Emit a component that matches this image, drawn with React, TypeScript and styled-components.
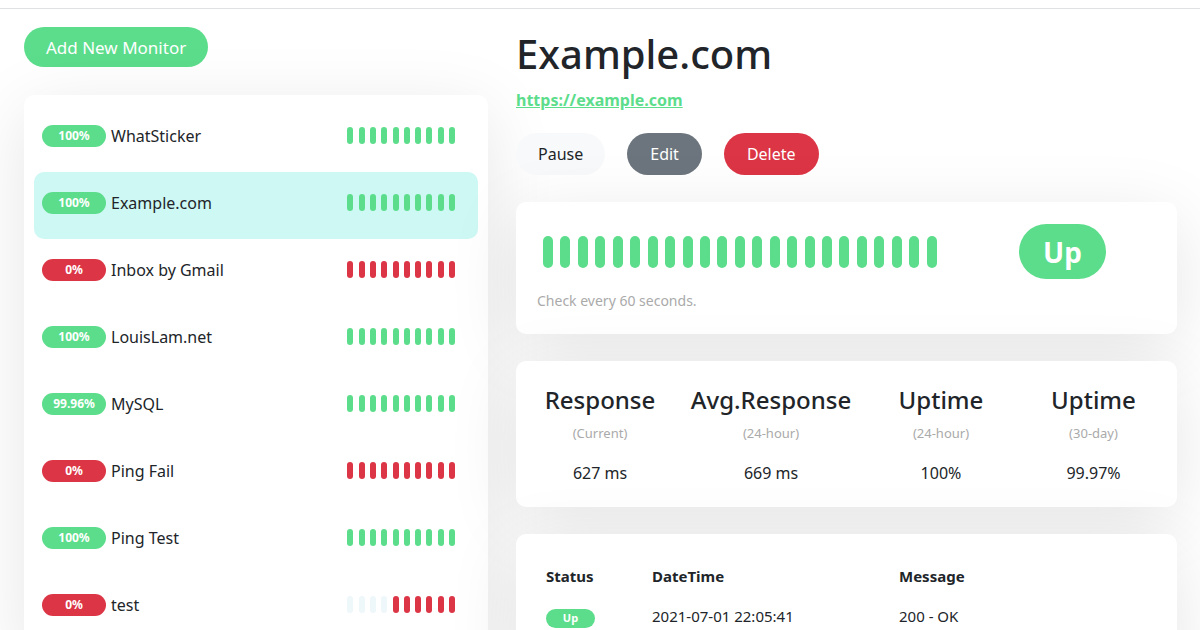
import React from 'react';
import styled, { createGlobalStyle } from 'styled-components';

const GREEN = '#5cdd8b';
const RED = '#dc3545';
const EMPTY = '#eef7fa';

type Beat = 'up' | 'down' | 'empty';

const monitors: { name: string; uptime: string; up: boolean; beats: Beat[] }[] = [
  { name: 'WhatSticker', uptime: '100%', up: true, beats: Array(10).fill('up') },
  { name: 'Example.com', uptime: '100%', up: true, beats: Array(10).fill('up') },
  { name: 'Inbox by Gmail', uptime: '0%', up: false, beats: Array(10).fill('down') },
  { name: 'LouisLam.net', uptime: '100%', up: true, beats: Array(10).fill('up') },
  { name: 'MySQL', uptime: '99.96%', up: true, beats: Array(10).fill('up') },
  { name: 'Ping Fail', uptime: '0%', up: false, beats: Array(10).fill('down') },
  { name: 'Ping Test', uptime: '100%', up: true, beats: Array(10).fill('up') },
  {
    name: 'test',
    uptime: '0%',
    up: false,
    beats: [...Array(4).fill('empty'), ...Array(6).fill('down')],
  },
];

const stats = [
  { title: 'Response', sub: '(Current)', value: '627 ms' },
  { title: 'Avg.Response', sub: '(24-hour)', value: '669 ms' },
  { title: 'Uptime', sub: '(24-hour)', value: '100%' },
  { title: 'Uptime', sub: '(30-day)', value: '99.97%' },
];

const beatColor = (b: Beat) => (b === 'up' ? GREEN : b === 'down' ? RED : EMPTY);

const GlobalStyle = createGlobalStyle`
  * { box-sizing: border-box; }
  html, body {
    margin: 0;
    background: #fff;
    font-family: "Noto Sans", "Open Sans", sans-serif;
    color: #212529;
    overflow: hidden;
  }
`;

const Header = styled.header`
  height: 9px;
  border-bottom: 1px solid #dfe1e3;
`;

const Layout = styled.main`
  display: grid;
  grid-template-columns: 464px 1fr;
  column-gap: 28px;
  padding: 0 23px 0 24px;
`;

const Sidebar = styled.div`
  display: flex;
  flex-direction: column;
  align-items: flex-start;
  padding-top: 18px;
`;

const PillButton = styled.button<{ $bg: string; $fg?: string }>`
  border: none;
  border-radius: 50rem;
  background: ${p => p.$bg};
  color: ${p => p.$fg || '#fff'};
  font-family: inherit;
  font-size: 16px;
  height: 42px;
  padding: 0 23px;
  cursor: pointer;
`;

const AddButton = styled(PillButton)`
  height: 40px;
  padding: 0 22px;
  font-size: 17px;
`;

const PauseButton = styled(PillButton)`
  padding: 0 22px;
`;

const Shadowed = styled.div`
  background: #fff;
  border-radius: 10px;
  box-shadow: 0 15px 70px rgba(0, 0, 0, 0.1);
`;

const ListPanel = styled(Shadowed)`
  align-self: stretch;
  margin-top: 28px;
  padding: 10px 10px 0;
  height: 560px;
`;

const ListRow = styled.div<{ $active?: boolean }>`
  display: flex;
  align-items: center;
  height: 67px;
  padding: 0 23px 6px 8px;
  border-radius: 10px;
  background: ${p => (p.$active ? '#cdf8f4' : 'transparent')};
`;

const UptimeBadge = styled.span<{ $up: boolean }>`
  display: inline-flex;
  align-items: center;
  justify-content: center;
  width: 64px;
  height: 22px;
  border-radius: 50rem;
  background: ${p => (p.$up ? GREEN : RED)};
  color: #fff;
  font-size: 12px;
  font-weight: 700;
`;

const MonitorName = styled.span`
  margin-left: 5px;
  font-size: 16px;
  flex: 1;
`;

const BeatRow = styled.div<{ $gap: number }>`
  display: flex;
  align-items: center;
  gap: ${p => p.$gap}px;
`;

const BeatBar = styled.div<{ $w: number; $h: number; $c: string }>`
  width: ${p => p.$w}px;
  height: ${p => p.$h}px;
  border-radius: 50rem;
  background: ${p => p.$c};
`;

const Detail = styled.section`
  display: flex;
  flex-direction: column;
  padding-top: 21px;
`;

const Title = styled.h1`
  margin: 0;
  font-size: 40px;
  font-weight: 500;
  line-height: 48px;
`;

const UrlLink = styled.a`
  margin-top: 10px;
  color: ${GREEN};
  font-weight: 700;
  font-size: 16px;
  line-height: 24px;
  text-decoration: underline;
  align-self: flex-start;
`;

const Actions = styled.div`
  display: flex;
  gap: 22px;
  margin-top: 21px;
`;

const Card = styled(Shadowed)`
  margin-top: 27px;
`;

const BeatCard = styled(Card)`
  padding: 22px 20px 23px 21px;
`;

const BeatLayout = styled.div`
  display: grid;
  grid-template-columns: 440px 1fr;
  align-items: center;
`;

const BigBeats = styled(BeatRow)`
  padding-left: 6px;
`;

const StatusBadge = styled.div`
  justify-self: start;
  margin-left: 42px;
  width: 87px;
  height: 55px;
  border-radius: 50rem;
  background: ${GREEN};
  color: #fff;
  font-size: 28px;
  font-weight: 700;
  display: flex;
  align-items: center;
  justify-content: center;
`;

const IntervalText = styled.div`
  margin-top: 12px;
  color: #aaa;
  font-size: 14px;
  line-height: 20px;
`;

const StatsCard = styled(Card)`
  display: grid;
  grid-template-columns: 140px 202px 138px 1fr;
  padding: 24px 0 22px 14px;
`;

const Stat = styled.div`
  display: flex;
  flex-direction: column;
  align-items: center;
  text-align: center;
`;

const StatTitle = styled.div`
  font-size: 24px;
  font-weight: 500;
  line-height: 29px;
`;

const StatSub = styled.div`
  margin-top: 10px;
  font-size: 13px;
  line-height: 19px;
  color: #aaa;
`;

const StatValue = styled.div`
  margin-top: 18px;
  font-size: 16px;
  line-height: 24px;
`;

const TableCard = styled(Card)`
  padding: 31px 20px 20px 30px;
  height: 200px;
`;

const TableGrid = styled.div`
  display: grid;
  grid-template-columns: 106px 247px 1fr;
  row-gap: 18px;
  align-items: center;
`;

const HeadCell = styled.div`
  font-size: 15px;
  font-weight: 700;
  line-height: 22px;
`;

const Cell = styled.div`
  font-size: 15px;
  line-height: 22px;
`;

const SmallUp = styled.span`
  display: inline-flex;
  align-items: center;
  justify-content: center;
  width: 49px;
  height: 19px;
  border-radius: 50rem;
  background: ${GREEN};
  color: #fff;
  font-size: 11px;
  font-weight: 700;
`;

export default function App() {
  return (
    <>
      <GlobalStyle />
      <Header />
      <Layout>
        <Sidebar>
          <AddButton $bg={GREEN}>Add New Monitor</AddButton>
          <ListPanel>
            {monitors.map((m, i) => (
              <ListRow key={m.name} $active={i === 1}>
                <UptimeBadge $up={m.up}>{m.uptime}</UptimeBadge>
                <MonitorName>{m.name}</MonitorName>
                <BeatRow $gap={5.3}>
                  {m.beats.map((b, j) => (
                    <BeatBar key={j} $w={6} $h={17} $c={beatColor(b)} />
                  ))}
                </BeatRow>
              </ListRow>
            ))}
          </ListPanel>
        </Sidebar>

        <Detail>
          <Title>Example.com</Title>
          <UrlLink href="#">https://example.com</UrlLink>
          <Actions>
            <PauseButton $bg="#f8f9fa" $fg="#212529">Pause</PauseButton>
            <PillButton $bg="#6c757d">Edit</PillButton>
            <PillButton $bg={RED}>Delete</PillButton>
          </Actions>

          <BeatCard>
            <BeatLayout>
              <BigBeats $gap={7.45}>
                {Array.from({ length: 23 }).map((_, i) => (
                  <BeatBar key={i} $w={10} $h={32} $c={GREEN} />
                ))}
              </BigBeats>
              <StatusBadge>Up</StatusBadge>
            </BeatLayout>
            <IntervalText>Check every 60 seconds.</IntervalText>
          </BeatCard>

          <StatsCard>
            {stats.map((s, i) => (
              <Stat key={i}>
                <StatTitle>{s.title}</StatTitle>
                <StatSub>{s.sub}</StatSub>
                <StatValue>{s.value}</StatValue>
              </Stat>
            ))}
          </StatsCard>

          <TableCard>
            <TableGrid>
              <HeadCell>Status</HeadCell>
              <HeadCell>DateTime</HeadCell>
              <HeadCell>Message</HeadCell>
              <Cell>
                <SmallUp>Up</SmallUp>
              </Cell>
              <Cell>2021-07-01 22:05:41</Cell>
              <Cell>200 - OK</Cell>
            </TableGrid>
          </TableCard>
        </Detail>
      </Layout>
    </>
  );
}
